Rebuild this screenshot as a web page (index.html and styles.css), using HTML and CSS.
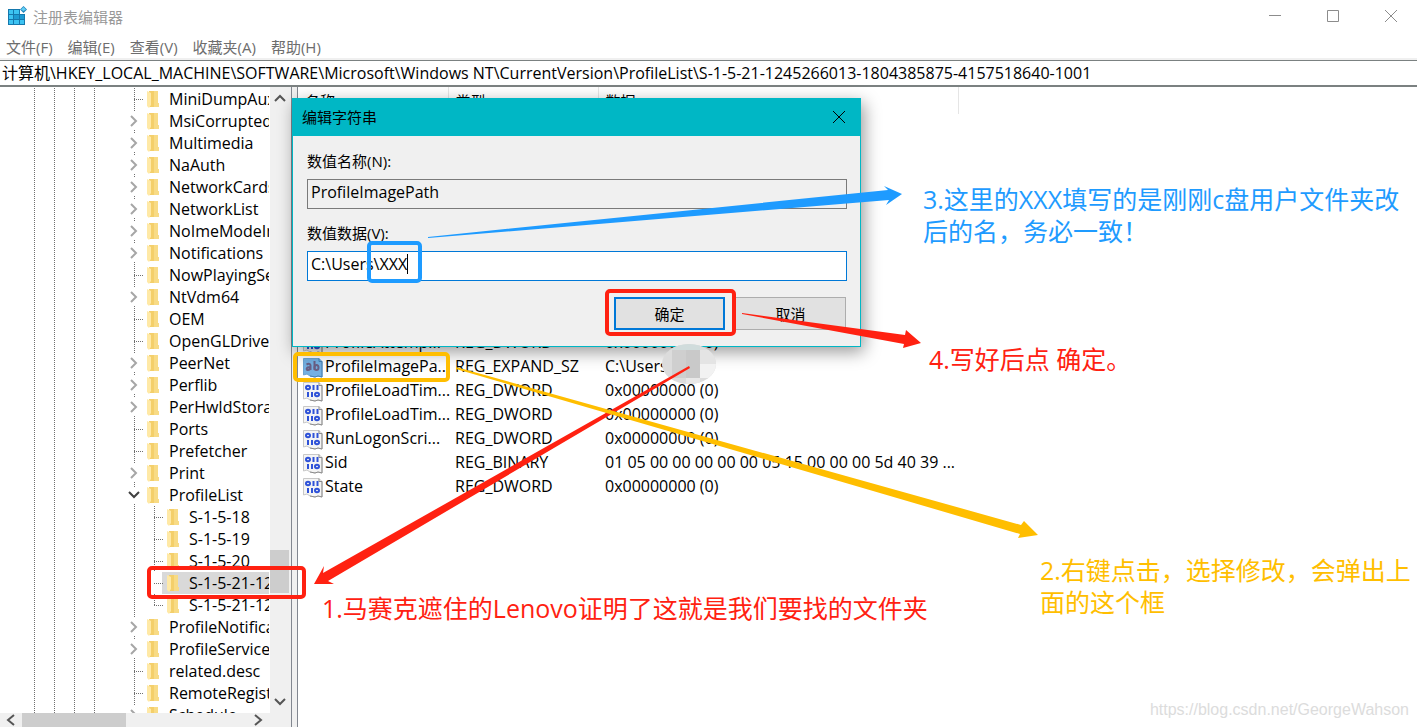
FILE: index.html
```html
<!DOCTYPE html>
<html lang="zh-CN">
<head>
  <meta charset="UTF-8">
  <meta name="viewport" content="width=device-width, initial-scale=1.0">
  <title>注册表编辑器</title>
  <link rel="stylesheet" href="styles.css">
</head>
<body>
  <svg class="defs" width="0" height="0">
    <symbol id="folder" viewBox="0 0 13 17">
      <path d="M2 0h9v12h1v4H2z" fill="#f4cf6a"/>
      <path d="M7 0h4v12h1v4H7z" fill="#f8db85"/>
      <path d="M0 0l4 2v12l-2 3-2-2z" fill="#ffe9a6"/>
    </symbol>
    <symbol id="closed" viewBox="0 0 10 12">
      <path d="M2 1l5 5-5 5" fill="none" stroke="#a6a6a6" stroke-width="2"/>
    </symbol>
    <symbol id="open" viewBox="0 0 12 10">
      <path d="M1 2l5 5 5-5" fill="none" stroke="#404040" stroke-width="2"/>
    </symbol>
    <symbol id="binary" viewBox="0 0 20 20">
      <path d="M.5.5H16l3 3V19l-4-1-3 1-5-1-3-2-3.500 1z" fill="#f4f4f4" stroke="#c8c8c8"/>
      <path d="M16 .5v3h3V19l-4-1-3 1-5-1" fill="none" stroke="#8c8c8c"/>
      <g fill="none" stroke="#2f52d8" stroke-width="2">
        <ellipse cx="5" cy="5.500" rx="2" ry="1.800"/>
        <path d="M10.500 3v5M14.500 3v5M5 10v5M9 10v5"/>
        <ellipse cx="14" cy="12.500" rx="2" ry="1.800"/>
      </g>
    </symbol>
    <symbol id="string" viewBox="0 0 20 20">
      <path d="M.5.5H16l3 3V19l-4-1-3 1-5-1-3-2-3.500 1z" fill="#74b0e2" stroke="#6da4d2"/>
      <path d="M16 .5v3h3V19l-4-1-3 1-5-1" fill="none" stroke="#4480b4"/>
      <g fill="none" stroke="#6a5f85" stroke-width="2">
        <path d="M3.500 6.500c2-1 4-1 4 1V12M7 9C3 9 3 12 5 12q2 0 2-2M11.500 3v9"/>
        <ellipse cx="13.500" cy="9.500" rx="2" ry="2.500"/>
      </g>
    </symbol>
  </svg>

  <header class="titlebar">
    <svg class="app-icon" viewBox="0 0 20 20">
      <path d="M0 3h12v5h5v11H0z" fill="#1578ad"/>
      <g fill="#3cc3f2">
        <path d="M1 4h4v4H1zM6 4h5v4H6zM1 9h4v4H1zM1 14h4v4H1zM6 14h5v4H6zM12 14h4v4h-4z"/>
        <path d="M6 9h5v4H6zM12 9h4v4h-4z" fill="#1d9ad2"/>
      </g>
      <path d="M15.500 0L19 3.500 15.500 7 12 3.500z" fill="#2386bd"/>
      <path d="M15.500 1L18 3.500 15.500 5 13 3.500z" fill="#62d0f6"/>
    </svg>
    <h1>注册表编辑器</h1>
    <div class="window-buttons">
      <button aria-label="最小化"><svg viewBox="0 0 12 12"><path d="M0 5.5h12"/></svg></button>
      <button aria-label="最大化"><svg viewBox="0 0 12 12"><path d="M.5.5h11v11H.5z"/></svg></button>
      <button aria-label="关闭"><svg viewBox="0 0 12 12"><path d="M0 0l12 12M12 0L0 12"/></svg></button>
    </div>
  </header>

  <nav class="menu">
    <button>文件(F)</button>
    <button>编辑(E)</button>
    <button>查看(V)</button>
    <button>收藏夹(A)</button>
    <button>帮助(H)</button>
  </nav>

  <input class="address" type="text" aria-label="地址" value="计算机\HKEY_LOCAL_MACHINE\SOFTWARE\Microsoft\Windows NT\CurrentVersion\ProfileList\S-1-5-21-1245266013-1804385875-4157518640-1001">

  <main class="panes">
    <section class="tree-pane">
      <div class="tree-row">
        <div class="tree">
          <div class="guides"><i></i><i></i><i></i><i></i></div>
          <ul>
            <li class="leaf"><svg class="folder"><use href="#folder"/></svg>MiniDumpAuxiliaryDlls</li>
            <li><svg class="twisty"><use href="#closed"/></svg><svg class="folder"><use href="#folder"/></svg>MsiCorruptedFileRecovery</li>
            <li><svg class="twisty"><use href="#closed"/></svg><svg class="folder"><use href="#folder"/></svg>Multimedia</li>
            <li><svg class="twisty"><use href="#closed"/></svg><svg class="folder"><use href="#folder"/></svg>NaAuth</li>
            <li><svg class="twisty"><use href="#closed"/></svg><svg class="folder"><use href="#folder"/></svg>NetworkCards</li>
            <li><svg class="twisty"><use href="#closed"/></svg><svg class="folder"><use href="#folder"/></svg>NetworkList</li>
            <li><svg class="twisty"><use href="#closed"/></svg><svg class="folder"><use href="#folder"/></svg>NoImeModeImes</li>
            <li><svg class="twisty"><use href="#closed"/></svg><svg class="folder"><use href="#folder"/></svg>Notifications</li>
            <li class="leaf"><svg class="folder"><use href="#folder"/></svg>NowPlayingSessionManager</li>
            <li><svg class="twisty"><use href="#closed"/></svg><svg class="folder"><use href="#folder"/></svg>NtVdm64</li>
            <li class="leaf"><svg class="folder"><use href="#folder"/></svg>OEM</li>
            <li class="leaf"><svg class="folder"><use href="#folder"/></svg>OpenGLDrivers</li>
            <li><svg class="twisty"><use href="#closed"/></svg><svg class="folder"><use href="#folder"/></svg>PeerNet</li>
            <li><svg class="twisty"><use href="#closed"/></svg><svg class="folder"><use href="#folder"/></svg>Perflib</li>
            <li><svg class="twisty"><use href="#closed"/></svg><svg class="folder"><use href="#folder"/></svg>PerHwIdStorage</li>
            <li class="leaf"><svg class="folder"><use href="#folder"/></svg>Ports</li>
            <li class="leaf"><svg class="folder"><use href="#folder"/></svg>Prefetcher</li>
            <li><svg class="twisty"><use href="#closed"/></svg><svg class="folder"><use href="#folder"/></svg>Print</li>
            <li><svg class="twisty open"><use href="#open"/></svg><svg class="folder"><use href="#folder"/></svg>ProfileList</li>
            <li class="branch">
              <ul>
                <li class="leaf"><svg class="folder"><use href="#folder"/></svg>S-1-5-18</li>
                <li class="leaf"><svg class="folder"><use href="#folder"/></svg>S-1-5-19</li>
                <li class="leaf"><svg class="folder"><use href="#folder"/></svg>S-1-5-20</li>
                <li class="leaf selected"><svg class="folder"><use href="#folder"/></svg>S-1-5-21-1245266013</li>
                <li class="leaf last"><svg class="folder"><use href="#folder"/></svg>S-1-5-21-1245266013</li>
              </ul>
            </li>
            <li><svg class="twisty"><use href="#closed"/></svg><svg class="folder"><use href="#folder"/></svg>ProfileNotification</li>
            <li><svg class="twisty"><use href="#closed"/></svg><svg class="folder"><use href="#folder"/></svg>ProfileService</li>
            <li class="leaf"><svg class="folder"><use href="#folder"/></svg>related.desc</li>
            <li class="leaf"><svg class="folder"><use href="#folder"/></svg>RemoteRegistry</li>
            <li><svg class="twisty"><use href="#closed"/></svg><svg class="folder"><use href="#folder"/></svg>Schedule</li>
          </ul>
        </div>
        <div class="scroll-y">
          <svg viewBox="0 0 12 12"><path d="M1 8l5-5 5 5"/></svg>
          <div class="track"><div class="thumb"></div></div>
          <svg viewBox="0 0 12 12"><path d="M1 4l5 5 5-5"/></svg>
        </div>
      </div>
      <div class="scroll-x">
        <svg viewBox="0 0 12 12"><path d="M9 1L3 6l6 5"/></svg>
        <div class="thumb"></div>
        <svg viewBox="0 0 12 12"><path d="M3 1l6 5-6 5"/></svg>
      </div>
    </section>

    <section class="list-pane">
      <table>
        <thead>
          <tr><th class="name">名称</th><th class="type">类型</th><th class="data">数据</th></tr>
        </thead>
        <tbody>
          <tr><td><svg><use href="#binary"/></svg>ProfileAttemp...</td><td>REG_DWORD</td><td>0x00000000 (0)</td></tr>
          <tr><td><svg><use href="#string"/></svg>ProfileImagePa...</td><td>REG_EXPAND_SZ</td><td>C:\Users</td></tr>
          <tr><td><svg><use href="#binary"/></svg>ProfileLoadTim...</td><td>REG_DWORD</td><td>0x00000000 (0)</td></tr>
          <tr><td><svg><use href="#binary"/></svg>ProfileLoadTim...</td><td>REG_DWORD</td><td>0x00000000 (0)</td></tr>
          <tr><td><svg><use href="#binary"/></svg>RunLogonScri...</td><td>REG_DWORD</td><td>0x00000000 (0)</td></tr>
          <tr><td><svg><use href="#binary"/></svg>Sid</td><td>REG_BINARY</td><td>01 05 00 00 00 00 00 05 15 00 00 00 5d 40 39 ...</td></tr>
          <tr><td><svg><use href="#binary"/></svg>State</td><td>REG_DWORD</td><td>0x00000000 (0)</td></tr>
        </tbody>
      </table>
    </section>
  </main>

  <form class="dialog" role="dialog" aria-labelledby="dialog-title">
    <div class="dialog-title">
      <h2 id="dialog-title">编辑字符串</h2>
      <button type="button" aria-label="关闭"><svg viewBox="0 0 12 12"><path d="M0 0l12 12M12 0L0 12"/></svg></button>
    </div>
    <div class="dialog-body">
      <label for="value-name">数值名称(N):</label>
      <input id="value-name" type="text" value="ProfileImagePath" readonly>
      <label for="value-data">数值数据(V):</label>
      <input id="value-data" type="text" value="C:\Users\XXX">
      <div class="dialog-buttons">
        <button type="button" class="primary">确定</button>
        <button type="button">取消</button>
      </div>
    </div>
  </form>

  <!-- boxes and arrows drawn over the window -->
  <svg class="marks" width="1100" height="620">
    <defs>
      <clipPath id="blob"><ellipse cx="689" cy="364" rx="27" ry="20"/></clipPath>
    </defs>
    <g clip-path="url(#blob)">
      <path d="M660 344h60v42h-60z" fill="#dcdcdc"/>
      <path d="M672 344h28v6h-28z" fill="#d0dcdc"/>
      <path d="M672 350h14v28h-14z" fill="#cfcfcf"/>
      <path d="M686 350h14v28h-14z" fill="#c9c9c9"/>
      <path d="M700 350h20v14h-20z" fill="#e4e4e4"/>
      <path d="M686 378h14v8h-14z" fill="#e8e8e8"/>
      <path d="M700 364h20v14h-20z" fill="#f2f2f2"/>
    </g>
    <path d="M407.500 254v20" stroke="#000"/>
    <g fill="none" stroke-width="4">
      <rect x="369" y="243" width="51" height="38" rx="3" stroke="#1e9bff"/>
      <rect x="607" y="291" width="127" height="43" rx="3" stroke="#ff2111"/>
      <rect x="295" y="354" width="153" height="26" rx="3" stroke="#ffbe00"/>
      <rect x="149" y="568" width="155" height="29" rx="3" stroke="#ff2111"/>
    </g>
    <path fill="#1e9bff" d="M428 237L888 190 884 186 902 194 886 205 889 200 428 238z"/>
    <path fill="#ff2111" d="M742 313L905 335 906 330 921 343 903 348 904 344 742 314z"/>
    <path fill="#ff2111" d="M689 366L323 573 324 566 314 584 334 584 328 581 690 368z"/>
    <path fill="#ffbe00" d="M456 367L1021 525 1024 521 1038 535 1018 538 1020 534 456 369z"/>
  </svg>

  <p class="note note-1">1.马赛克遮住的Lenovo证明了这就是我们要找的文件夹</p>
  <p class="note note-2">2.右键点击，选择修改，会弹出上<br>面的这个框</p>
  <p class="note note-3">3.这里的XXX填写的是刚刚c盘用户文件夹改<br>后的名，务必一致！</p>
  <p class="note note-4">4.写好后点 确定。</p>
  <a class="watermark" href="https://blog.csdn.net/GeorgeWahson">https://blog.csdn.net/GeorgeWahson</a>
</body>
</html>
```
FILE: styles.css
```css
* {
  box-sizing: border-box;
}

body {
  margin: 0;
  height: 100vh;
  display: flex;
  flex-direction: column;
  position: relative;
  overflow: hidden;
  background: #fff;
  color: #000;
  font-family: "Open Sans", "Noto Sans CJK SC", sans-serif;
  font-size: 15px;
}

button, input {
  font: inherit;
  color: inherit;
}

button {
  padding: 0;
  border: none;
  background: none;
}

ul {
  list-style: none;
  margin: 0;
  padding: 0;
}

.defs {
  position: absolute;
}

/* title bar and menu */
.titlebar {
  display: flex;
  align-items: center;
  flex: none;
  height: 32px;
  padding-left: 8px;
  color: #999;
}

.app-icon {
  width: 20px;
  height: 20px;
}

.titlebar h1 {
  flex: 1;
  margin: 0 0 0 5px;
  font-size: 15px;
  font-weight: normal;
}

.window-buttons {
  display: flex;
  gap: 6px;
}

.window-buttons button {
  width: 52px;
  height: 32px;
}

.window-buttons svg {
  width: 12px;
  height: 12px;
  fill: none;
  stroke: #8c8c8c;
}

.menu {
  display: flex;
  flex: none;
  gap: 15px;
  height: 28px;
  padding: 2px 0 0 6px;
  border-bottom: 2px solid #f0f0f0;
  color: #6d6d6d;
}

.address {
  flex: none;
  width: 100%;
  height: 27px;
  padding: 0 2px 2px;
  border: solid #7b8181;
  border-width: 1px 0 2px;
  outline: none;
  font-size: 16px;
}

/* key tree */
.panes {
  flex: 1;
  display: flex;
  gap: 5px;
  min-height: 0;
  background: #f0f0f0;
}

.tree-pane {
  flex: none;
  display: flex;
  flex-direction: column;
  width: 292px;
  border-right: 1px solid #828790;
  background: #fff;
  font-size: 16px;
}

.tree-row {
  flex: 1;
  display: flex;
  min-height: 0;
}

.tree {
  flex: 1;
  display: flex;
  overflow: hidden;
  padding: 1px 0 0 34px;
}

.guides {
  display: flex;
  flex: none;
  width: 90px;
}

.guides i {
  flex: none;
  width: 20px;
  border-left: 1px dotted #707070;
}

.tree ul {
  flex: 1;
  min-width: 0;
}

.tree li {
  display: flex;
  align-items: center;
  height: 22px;
  line-height: 22px;
  white-space: nowrap;
  overflow: hidden;
  background: repeating-linear-gradient(#707070 0 1px, transparent 1px 2px) 10px 0 / 1px 100% no-repeat;
}

.tree li.branch {
  height: auto;
  padding-left: 20px;
}

.leaf::before {
  content: "";
  flex: none;
  width: 9px;
  margin: 0 4px 0 10px;
  border-top: 1px dotted #707070;
}

.tree li.last {
  background-size: 1px 50%;
}

.tree li.selected {
  background: linear-gradient(90deg, transparent 18px, #d9d9d9 18px);
}

.twisty {
  flex: none;
  width: 10px;
  height: 12px;
  margin: 0 8px 0 5px;
  background: #fff;
  outline: 3px solid #fff;
}

.twisty.open {
  width: 12px;
  height: 10px;
  margin: 0 7px 0 4px;
}

.folder {
  flex: none;
  width: 13px;
  height: 17px;
  margin-right: 9px;
}

.scroll-y {
  flex: none;
  display: flex;
  flex-direction: column;
  align-items: center;
  width: 22px;
  padding: 6px 2px 6px 0;
  border-left: 1px solid #fff;
  background: #f0f0f0;
}

.scroll-y svg, .scroll-x svg {
  flex: none;
  width: 12px;
  height: 12px;
  fill: none;
  stroke: #555;
  stroke-width: 2;
}

.track {
  flex: 1;
  width: 100%;
  display: flex;
  flex-direction: column;
  justify-content: flex-end;
}

.scroll-y .thumb {
  height: 43px;
  margin-bottom: 102px;
  background: #cdcdcd;
}

.scroll-x {
  flex: none;
  display: flex;
  align-items: center;
  height: 14px;
  padding: 0 27px 0 5px;
  background: #f0f0f0;
}

.scroll-x .thumb {
  width: 104px;
  height: 14px;
  margin: 0 auto 0 5px;
  background: #cdcdcd;
}

/* value list */
.list-pane {
  flex: 1;
  min-width: 0;
  border-left: 1px solid #828790;
  background: #fff;
}

table {
  border-collapse: collapse;
  table-layout: fixed;
  width: 661px;
}

th {
  height: 27px;
  padding: 0 0 0 7px;
  border-right: 1px solid #e5e5e5;
  font-weight: normal;
  text-align: left;
}

.name, .type {
  width: 150px;
}

/* the list is scrolled down behind the dialog */
tbody::before {
  content: "";
  display: block;
  height: 216px;
}

td {
  height: 24px;
  padding: 0 0 0 7px;
  font-size: 16px;
  line-height: 24px;
  white-space: nowrap;
}

td:first-child {
  padding-left: 5px;
}

td svg {
  width: 20px;
  height: 20px;
  margin-right: 2px;
  vertical-align: middle;
}

/* edit string dialog */
.dialog {
  position: absolute;
  left: 292px;
  top: 98px;
  width: 569px;
  border: 1px solid #00b7c5;
  background: #f0f0f0;
  box-shadow: 3px 5px 16px rgba(0, 0, 0, 0.4);
}

.dialog-title {
  display: flex;
  justify-content: space-between;
  align-items: center;
  height: 37px;
  padding: 0 15px 2px 9px;
  background: #00b7c5;
}

.dialog-title h2 {
  margin: 0;
  font-size: 15px;
  font-weight: normal;
}

.dialog-title button {
  display: flex;
}

.dialog-title svg {
  width: 12px;
  height: 12px;
  fill: none;
  stroke: #000;
}

.dialog-body {
  display: flex;
  flex-direction: column;
  padding: 15px 13px 16px 14px;
}

.dialog-body label {
  line-height: 20px;
  margin-bottom: 8px;
}

.dialog-body input {
  height: 30px;
  margin-bottom: 14px;
  padding: 0 3px 4px;
  border: 1px solid #0078d7;
  background: #fff;
  outline: none;
  font-size: 16px;
}

.dialog-body input[readonly] {
  border-color: #7a7a7a;
  background: #f0f0f0;
}

.dialog-buttons {
  display: flex;
  justify-content: flex-end;
  gap: 10px;
  margin: 2px 1px 0 0;
}

.dialog-buttons button {
  width: 111px;
  height: 33px;
  border: 1px solid #adadad;
  background: #e1e1e1;
}

.dialog-buttons .primary {
  border: 2px solid #0078d7;
}

/* notes */
.marks {
  position: absolute;
  left: 0;
  top: 0;
  pointer-events: none;
}

.note {
  position: absolute;
  margin: 0;
  font-size: 25px;
  line-height: 32px;
  white-space: nowrap;
}

.note-1 {
  left: 322px;
  top: 592px;
  color: #ff2111;
}

.note-2 {
  left: 1040px;
  top: 554px;
  color: #ffbe00;
}

.note-3 {
  left: 923px;
  top: 183px;
  color: #1e9bff;
}

.note-4 {
  left: 929px;
  top: 343px;
  color: #ff2111;
}

.watermark {
  position: absolute;
  right: 8px;
  bottom: 8px;
  font-family: "Liberation Sans", Arial, sans-serif;
  font-size: 16px;
  color: #dcdcdc;
  text-decoration: none;
}
```
